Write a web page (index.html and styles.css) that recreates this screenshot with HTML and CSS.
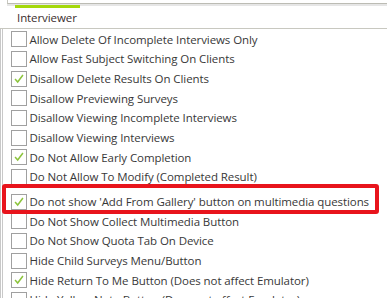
FILE: index.html
```html
<!DOCTYPE html>
<html lang="en">
<head>
  <meta charset="UTF-8">
  <title>Interviewer Settings</title>
  <link rel="stylesheet" href="styles.css">
</head>
<body>
  <!-- upper panel edge -->
  <div class="panel-top"></div>

  <div class="tabs">
    <div class="tab active">Interviewer</div>
  </div>

  <ul class="options">
    <li class="option"><span class="box"></span>Allow Delete Of Incomplete Interviews Only</li>
    <li class="option"><span class="box"></span>Allow Fast Subject Switching On Clients</li>
    <li class="option"><span class="box checked"><svg viewBox="0 0 16 16"><polyline points="3.5,8 6.5,11.5 12.5,3.5"/></svg></span>Disallow Delete Results On Clients</li>
    <li class="option"><span class="box"></span>Disallow Previewing Surveys</li>
    <li class="option"><span class="box"></span>Disallow Viewing Incomplete Interviews</li>
    <li class="option"><span class="box"></span>Disallow Viewing Interviews</li>
    <li class="option"><span class="box checked"><svg viewBox="0 0 16 16"><polyline points="3.5,8 6.5,11.5 12.5,3.5"/></svg></span>Do Not Allow Early Completion</li>
    <li class="option"><span class="box"></span>Do Not Allow To Modify (Completed Result)</li>
    <li class="option highlight"><span class="box checked"><svg viewBox="0 0 16 16"><polyline points="3.5,8 6.5,11.5 12.5,3.5"/></svg></span>Do not show 'Add From Gallery' button on multimedia questions</li>
    <li class="option"><span class="box"></span>Do Not Show Collect Multimedia Button</li>
    <li class="option"><span class="box"></span>Do Not Show Quota Tab On Device</li>
    <li class="option"><span class="box"></span>Hide Child Surveys Menu/Button</li>
    <li class="option"><span class="box checked"><svg viewBox="0 0 16 16"><polyline points="3.5,8 6.5,11.5 12.5,3.5"/></svg></span>Hide Return To Me Button (Does not affect Emulator)</li>
    <li class="option"><span class="box"></span>Hide Yellow Note Button (Does not affect Emulator)</li>
  </ul>
</body>
</html>
```

FILE: styles.css
```css
body {
  margin: 0;
  background: #fff;
  font: 11.5px 'Open Sans', 'Noto Sans', sans-serif;
  letter-spacing: -0.08px;
  color: #383838;
  overflow: hidden;
}

.panel-top {
  height: 3px;
  margin-left: 7px;
  border-left: 1px solid #c8c8c0;
  border-bottom: 1px solid #bcbcb4;
  box-shadow: 0 2px 0 #e6e6e6;
}

.tabs {
  display: flex;
  height: 23px;
  margin-top: 1px;
  padding-left: 15px;
  border-bottom: 1px solid #c8c8c0;
}

.tab {
  width: 65px;
  padding-left: 2px;
  line-height: 20px;
  box-sizing: border-box;
  color: #3a2e2e;
}

.tab.active {
  border-top: 3px solid #a4d80c;
}

.options {
  list-style: none;
  margin: 0;
  padding: 0.5px 0 0;
  border-left: 3px double #c8c8c8;
}

.option {
  display: flex;
  align-items: center;
  gap: 3px;
  height: 19.67px;
  padding-left: 7.5px;
  white-space: nowrap;
}

.box {
  flex: none;
  width: 16px;
  height: 16px;
  border: 1px solid #a0a0a0;
  box-sizing: border-box;
  background: #fff;
}

.box svg {
  display: block;
  width: 14px;
  height: 14px;
  fill: none;
  stroke: #8cc43c;
  stroke-width: 1.7;
}

/* red annotation frame */
.highlight {
  position: relative;
  margin-top: 5px;
}

.highlight::after {
  content: '';
  position: absolute;
  top: -8px;
  bottom: -3px;
  left: -1px;
  width: 377px;
  border: 4px solid #e8141c;
  border-radius: 3px;
  box-sizing: border-box;
}
```
